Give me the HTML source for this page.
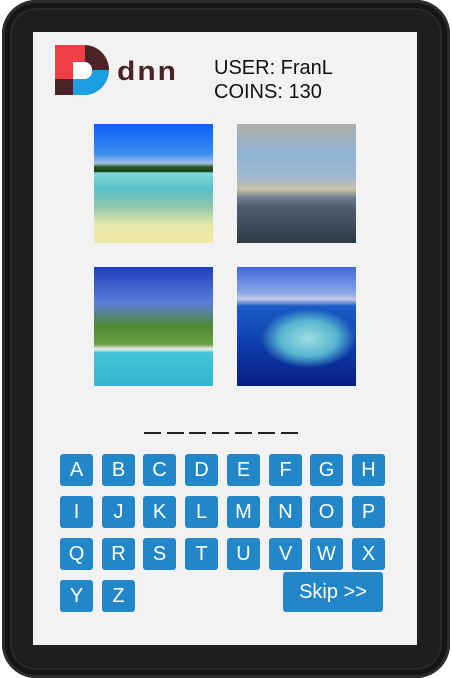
<!DOCTYPE html>
<html><head><style>
*{margin:0;padding:0;box-sizing:border-box}
body{width:452px;height:678px;background:#fff;position:relative;overflow:hidden;font-family:"Liberation Sans",sans-serif}
.frame{position:absolute;left:2px;top:0;width:448px;height:678px;background:#1e1e20;border-radius:34px;box-shadow:inset 0 0 0 3px #2c2c2e,inset 0 0 0 8px #151516,inset 0 0 0 10px #2a2a2c}
.screen{position:absolute;left:33px;top:32px;width:384px;height:613px;background:#f2f2f2}
.img{position:absolute;width:119px;height:119px}
.k{position:absolute;width:33px;height:32px;background:#2287c8;border-radius:3px;color:#fff;font-size:20px;text-align:center;line-height:32px}
.dash{position:absolute;top:432px;width:17px;height:2px;background:#222}
</style></head><body>
<div class="frame"></div>
<div class="screen"></div>
<div style="position:absolute;left:55px;top:45px;width:54px;height:50px">
<svg width="54" height="50" viewBox="0 0 54 50">
<rect x="0" y="0" width="18" height="50" fill="#ef4046"/>
<rect x="0" y="0" width="30" height="17" fill="#ef4046"/>
<path d="M30 0 A25 25 0 0 1 54 25 L37 25 A8 8 0 0 0 30 17 Z" fill="#4a2329"/>
<path d="M54 25 A25 25 0 0 1 30 50 L18 50 L18 34 L30 34 A8 8 0 0 0 37 25 Z" fill="#1aa0e2"/>
<rect x="0" y="34" width="18" height="16" fill="#4a2329"/>
<rect x="18" y="17" width="12" height="17" fill="#fff"/>
<path d="M30 17 A8 8 0 0 1 37 25 L30 25Z" fill="#fff"/>
<path d="M30 25 L37 25 A8 8 0 0 1 30 34Z" fill="#fff"/>
</svg></div>
<div style="position:absolute;left:117px;top:57px;font-size:30px;font-weight:bold;color:#4a2329;letter-spacing:2px;line-height:30px;transform:scaleY(0.9)">dnn</div>
<div style="position:absolute;left:214px;top:56px;font-size:20px;line-height:24px;color:#111">USER: FranL<br>COINS: 130</div>
<div class="img" style="left:94px;top:124px;background:linear-gradient(#0c5ff5 0%,#3b8ef0 25%,#9fc2e8 33%,#2d5a25 36%,#1a4020 40%,#7fd8d8 41%,#5abfc9 55%,#93c7ae 70%,#e8e8a8 85%,#efe7a5 100%)"></div>
<div class="img" style="left:237px;top:124px;background:linear-gradient(#b0aea8 0%,#8eb2d4 25%,#a2b8cf 45%,#c9c0a8 55%,#6f7e8c 62%,#4d5d6d 70%,#3e4d5c 85%,#2d3944 100%)"></div>
<div class="img" style="left:94px;top:267px;background:linear-gradient(#1c3fbd 0%,#5a7ed8 30%,#4e8a32 50%,#6aa042 65%,#f2f2f2 69%,#44c3d6 72%,#34b5d0 100%)"></div>
<div class="img" style="left:237px;top:267px;background:radial-gradient(ellipse 40% 25% at 60% 60%,#9edde0 0%,#56b5d0 60%,transparent 100%),linear-gradient(#3e68d8 0%,#8aa8e8 22%,#c8c6e8 27%,#1a5cc6 33%,#0c3aa8 70%,#061c84 100%)"></div>
<div class="dash" style="left:144px"></div><div class="dash" style="left:167px"></div><div class="dash" style="left:189px"></div><div class="dash" style="left:212px"></div><div class="dash" style="left:235px"></div><div class="dash" style="left:258px"></div><div class="dash" style="left:281px"></div>
<div class="k" style="left:60px;top:454px">A</div><div class="k" style="left:102px;top:454px">B</div><div class="k" style="left:143px;top:454px">C</div><div class="k" style="left:185px;top:454px">D</div><div class="k" style="left:227px;top:454px">E</div><div class="k" style="left:269px;top:454px">F</div><div class="k" style="left:310px;top:454px">G</div><div class="k" style="left:352px;top:454px">H</div>
<div class="k" style="left:60px;top:496px">I</div><div class="k" style="left:102px;top:496px">J</div><div class="k" style="left:143px;top:496px">K</div><div class="k" style="left:185px;top:496px">L</div><div class="k" style="left:227px;top:496px">M</div><div class="k" style="left:269px;top:496px">N</div><div class="k" style="left:310px;top:496px">O</div><div class="k" style="left:352px;top:496px">P</div>
<div class="k" style="left:60px;top:538px">Q</div><div class="k" style="left:102px;top:538px">R</div><div class="k" style="left:143px;top:538px">S</div><div class="k" style="left:185px;top:538px">T</div><div class="k" style="left:227px;top:538px">U</div><div class="k" style="left:269px;top:538px">V</div><div class="k" style="left:310px;top:538px">W</div><div class="k" style="left:352px;top:538px">X</div>
<div class="k" style="left:60px;top:580px">Y</div><div class="k" style="left:102px;top:580px">Z</div>
<div class="k" style="left:283px;top:572px;width:100px;height:40px;line-height:40px;font-size:20px">Skip &gt;&gt;</div>
</body></html>
